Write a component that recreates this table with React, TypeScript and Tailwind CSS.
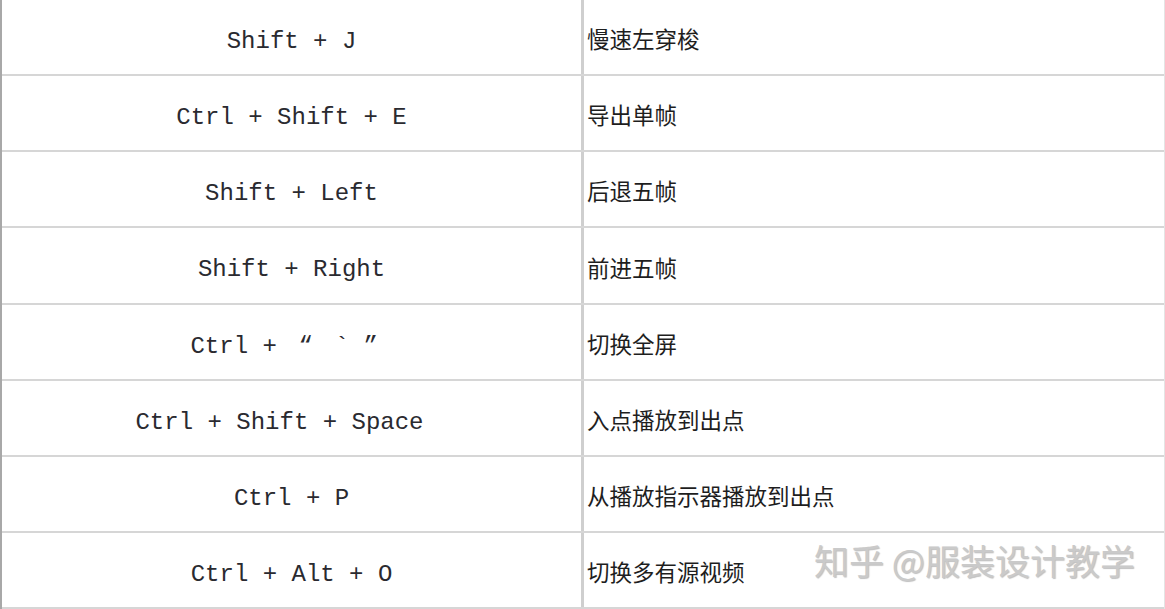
import type { ReactNode } from "react"

const Q = ({ children, align }: { children: ReactNode; align: string }) => (
  <span className={`inline-block w-[29px] ${align}`}>{children}</span>
)

const rows: { keys: ReactNode; desc: string; shift?: string }[] = [
  { keys: "Shift + J", desc: "慢速左穿梭" },
  { keys: "Ctrl + Shift + E", desc: "导出单帧" },
  { keys: "Shift + Left", desc: "后退五帧" },
  { keys: "Shift + Right", desc: "前进五帧" },
  {
    keys: (
      <>
        {"Ctrl + "}
        <Q align="text-center">“</Q>
        {" ` "}
        <Q align="text-left">”</Q>
      </>
    ),
    desc: "切换全屏",
  },
  { keys: "Ctrl + Shift + Space", desc: "入点播放到出点", shift: "pr-[24px]" },
  { keys: "Ctrl + P", desc: "从播放指示器播放到出点" },
  { keys: "Ctrl + Alt + O", desc: "切换多有源视频" },
]

export default function App() {
  return (
    <main className="relative w-[1165px] h-[609px] overflow-hidden bg-white">
      <div className="flex flex-col h-full border-l-2 border-l-[#a8a8a8] border-r border-r-[#e4e4e4]">
        {rows.map((row) => (
          <div key={row.desc} className="flex-1 flex border-b-2 border-[#d6d6d6]">
            <div
              className={`w-[582px] flex items-center justify-center pt-[10px] border-r-[3px] border-[#cfcfcf] font-['Liberation_Mono',monospace] text-[24px] text-[#2a2a30] whitespace-pre ${row.shift ?? ""}`}
            >
              {row.keys}
            </div>
            <div className="flex-1 flex items-center pl-[3px] pt-[4px] font-['Noto_Sans_CJK_SC',sans-serif] text-[22.5px] text-[#1e1e1e]">
              {row.desc}
            </div>
          </div>
        ))}
      </div>
      <div className="absolute left-[814px] top-[542px] font-['Noto_Sans_CJK_SC',sans-serif] text-[35px] leading-none text-[#cacaca] [text-shadow:1px_1px_1px_rgba(0,0,0,0.25)]">
        知乎 @服装设计教学
      </div>
    </main>
  )
}
